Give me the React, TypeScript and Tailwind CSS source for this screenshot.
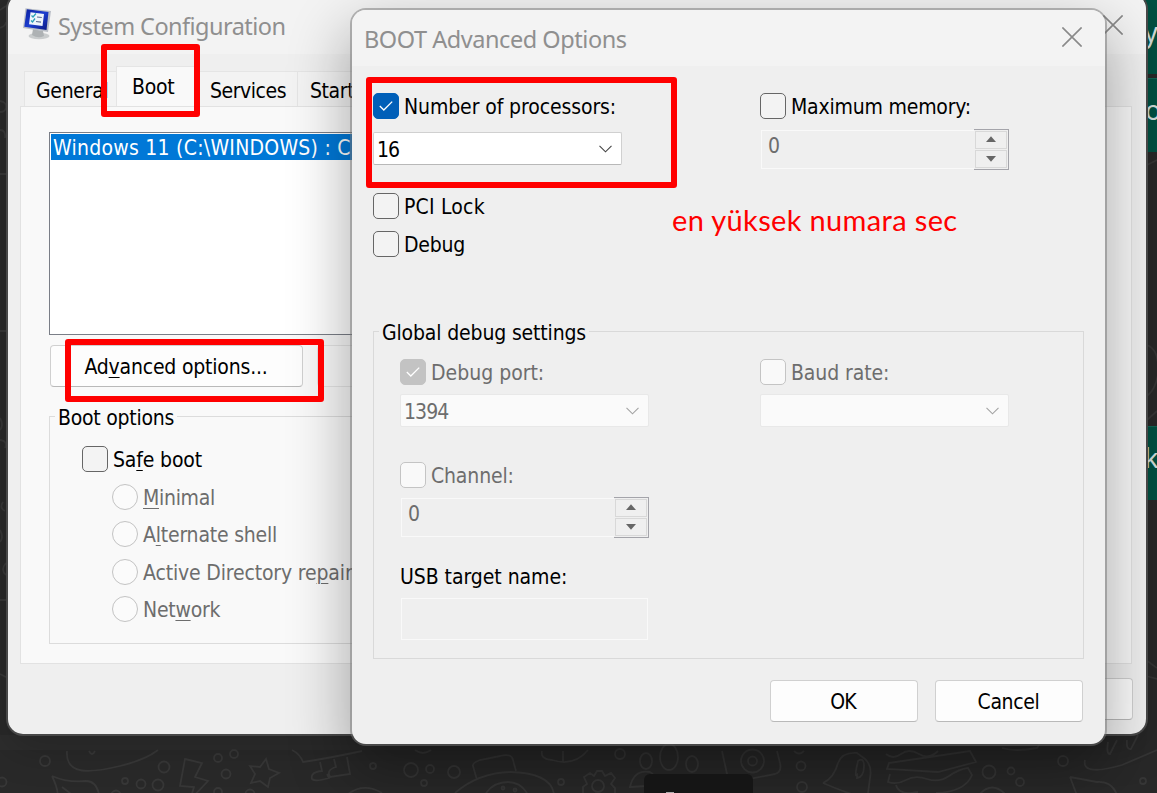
import type { ReactNode } from "react";

const ui = "font-['DejaVu_Sans_Condensed','DejaVu_Sans',sans-serif] [font-stretch:condensed] text-[21px] leading-[26px] whitespace-nowrap";

function Check({ on, disabled }: { on?: boolean; disabled?: boolean }) {
  const look = on
    ? disabled ? "bg-[#c3c3c3] border-[#c3c3c3]" : "bg-[#005fb8] border-[#005fb8]"
    : disabled ? "bg-[#f9f9f9] border-[#c4c4c4]" : "bg-[#f3f3f3] border-[#666]";
  return (
    <span className={`flex size-[26px] shrink-0 items-center justify-center rounded-[5px] border ${look}`}>
      {on && (
        <svg width="14" height="12" viewBox="0 0 14 12" fill="none" stroke="#fff" strokeWidth="1.3">
          <path d="M.8 6 4.8 10 13.2 1.6" />
        </svg>
      )}
    </span>
  );
}

function CheckRow({ children, on, disabled, className = "", track = "" }: {
  children: ReactNode; on?: boolean; disabled?: boolean; className?: string; track?: string;
}) {
  return (
    <label className={`flex h-[26px] shrink-0 items-center gap-[5px] ${disabled ? "text-[#6d6d6d]" : "text-black"} ${className}`}>
      <Check on={on} disabled={disabled} />
      <span className={`pt-[2px] ${track}`}>{children}</span>
    </label>
  );
}

function Radio({ children, track, className = "" }: { children: ReactNode; track: string; className?: string }) {
  return (
    <label className={`flex h-[26px] shrink-0 items-center gap-[5px] text-[#6d6d6d] ${className}`}>
      <span className="size-[26px] shrink-0 rounded-full border border-[#c3c3c3] bg-[#fbfbfb]" />
      <span className={`pt-[2px] ${track}`}>{children}</span>
    </label>
  );
}

function Select({ value, disabled, className }: { value: string; disabled?: boolean; className: string }) {
  return (
    <div className={`flex h-[33px] w-[249px] shrink-0 items-center justify-between rounded-[2px] border pr-[9px] pl-[3px] ${disabled ? "border-[#e8e8e8] bg-[#fafafa] text-[#6d6d6d]" : "border-[#d0d0d0] border-b-[#b8b8b8] bg-white text-black"} ${className}`}>
      <span className="pt-[2px] tracking-[-0.9px]">{value}</span>
      <svg width="13" height="8" viewBox="0 0 13 8" fill="none" stroke={disabled ? "#a3a3a3" : "#444"} strokeWidth="1.1">
        <path d="M.5.8 6.5 6.8 12.5.8" />
      </svg>
    </div>
  );
}

function Spinner({ className }: { className: string }) {
  return (
    <div className={`flex h-[41px] w-[249px] shrink-0 items-stretch ${className}`}>
      <div className="mt-px mb-px ml-px flex w-[213px] border border-r-0 border-[#f9f9f9] pt-[2px] pl-[6px] text-[#6d6d6d]">
        <span>0</span>
      </div>
      <div className="flex w-[35px] flex-col gap-px border border-l-0 border-[#a4a4aa] py-px pr-px pl-[1px]">
        <span className="flex flex-1 items-center justify-center border border-[#d8d8d8]">
          <svg width="10" height="6" className="mb-[2px]"><path d="M0 6 5 .3 10 6Z" fill="#666" /></svg>
        </span>
        <span className="flex flex-1 items-center justify-center border border-[#d8d8d8]">
          <svg width="10" height="6"><path d="M0 0 5 5.7 10 0Z" fill="#666" /></svg>
        </span>
      </div>
    </div>
  );
}

function Close({ className }: { className: string }) {
  return (
    <svg width="20" height="20" viewBox="0 0 20 20" stroke="#8a8a8a" strokeWidth="1.6" className={`shrink-0 ${className}`}>
      <path d="M.4.4 19.6 19.6M19.6.4.4 19.6" />
    </svg>
  );
}

function ComputerIcon() {
  return (
    <svg width="28" height="32" viewBox="0 0 28 32" className="-mt-[4px] shrink-0">
      <defs>
        <linearGradient id="scr" x1="0" y1="0" x2="1" y2="1">
          <stop offset="0" stopColor="#0a1ea0" />
          <stop offset=".5" stopColor="#1d3fd0" />
          <stop offset="1" stopColor="#0a1880" />
        </linearGradient>
      </defs>
      <ellipse cx="16" cy="28" rx="10.5" ry="3.2" fill="#c9cccd" />
      <path d="M10 21 20 23 21 28 Q15 31 9 27Z" fill="#aeb2b4" />
      <path d="M2.5 .3 28 3 25 24 0 20Z" fill="#b9bec6" />
      <path d="M3.800 1.300 25.500 4 23.500 22 1.300 18.800Z" fill="url(#scr)" />
      <path d="M7.500 4.300 21 6 19.500 18 6 16.200Z" fill="#eef4fb" />
      <path d="M8.500 7.500 10 9 13 5.500M8 12.500 9.500 14 12 10.500" fill="none" stroke="#2aa0b8" strokeWidth="1.300" />
      <path d="M14 9 18.800 9.500M13 13.500 18 14.100" stroke="#5b6f94" strokeWidth="1.200" />
    </svg>
  );
}

function Wallpaper() {
  return (
    <svg width="1157" height="793" viewBox="0 0 1157 793" fill="none" stroke="#373737" strokeWidth="1.8" className="absolute inset-0">
      <path d="M0 735H400V750H0Z" fill="#2d2d2d" stroke="none" />
      <circle cx="45" cy="761" r="5" /><circle cx="2" cy="782" r="4.500" />
      <circle cx="164" cy="767" r="5.500" /><circle cx="125" cy="781" r="3" />
      <circle cx="141" cy="784" r="4.500" /><circle cx="158" cy="785" r="5.500" />
      <circle cx="218" cy="758" r="4" /><circle cx="234" cy="754" r="4" />
      <circle cx="226" cy="774" r="4.500" /><circle cx="373" cy="766" r="3" />
      <circle cx="116" cy="795" r="4.500" /><circle cx="218" cy="792" r="4" /><circle cx="250" cy="794" r="4.500" />
      <path d="M67 751C65 776 91 773 120 766Q145 760 158 750M89 751Q92 757 95 751" />
      <path d="M52 776Q60 793 57 800M52 776Q68 783 86 781Q96 781 99 794M62 787 75 797" />
      <path d="M185 759 202 763 195 777 208 781 190 800 194 787 180 786Z" />
      <path d="M266 759 269 769 279 773 270 778 268 787 260 781 251 783 255 774 250 766 260 767Z" />
      <path d="M292 750Q300 754 303 762 330 758 362 751M320 762 322 771Q310 772 312 779 315 782 329 778L327 774M334 759 336 767Q326 770 330 777L350 774 347 757" />
      <path d="M347 795Q363 782 382 793" />
      <circle cx="411" cy="770" r="7" /><circle cx="430" cy="769" r="4" /><circle cx="424" cy="783" r="3" /><circle cx="454" cy="772" r="6" />
      <path d="M415 750Q423 756 431 750M477 780 473 766Q472 763 480 760L500 756Q512 753 513 760L516 771M455 793Q478 773 510 772 552 773 554 795M486 793Q494 782 508 782 520 782 527 793" />
      <circle cx="503" cy="788" r="1.500" /><circle cx="515" cy="790" r="1.500" />
      <path d="M542 751Q540 759 552 760 574 767 588 750M563 751V762" />
      <circle cx="561" cy="782" r="3" /><circle cx="620" cy="754" r="5" />
      <circle cx="598" cy="786" r="6" />
      <path d="M583 795V787L587 784 584 777 590 773 594 776 597 771H602L605 776 611 773 615 778 611 784 615 788V795" />
      <ellipse cx="646" cy="761" rx="6" ry="8" /><ellipse cx="669" cy="757" rx="9" ry="13" /><ellipse cx="692" cy="764" rx="6" ry="8" />
      <path d="M630 787Q634 769 650 772 660 778 647 786Z" />
      <path d="M722 751 729 783 775 774Q782 772 780 763L777 751" />
      <circle cx="752.500" cy="761" r="11.500" /><circle cx="752.500" cy="761" r="4.500" />
      <circle cx="801" cy="766" r="4.500" /><circle cx="802" cy="787" r="5" /><path d="M794 751Q799 756 804 751" />
      <path d="M823 783Q834 778 838 763 842 752 857 753L861 756Q873 763 870 778L868 793M823 783Q844 792 858 796M857 775Q854 778 858 761 864 757 864 766 864 777 857 778Z" />
      <path d="M886 754Q893 760 901 754T919 754T938 751M889 763 970 751 976 762 938 772 887 769ZM890 774 888 782Q897 785 906 780T927 779T949 776T968 768L972 775Q965 792 936 793M896 785Q899 796 918 792" />
      <circle cx="989" cy="772" r="6.500" /><circle cx="1011" cy="771" r="3.500" /><circle cx="1020" cy="782" r="4" /><circle cx="1063" cy="761" r="5" /><circle cx="1143" cy="781" r="3" />
      <path d="M979 795Q992 780 1006 795M1002 748Q1015 752 1037 748L1041 742M1085 760C1082 772 1098 772 1122 765L1157 750M1108 742Q1106 754 1110 754L1117 740M1127 740Q1126 750 1131 749L1138 735M1070 777 1078 798M1070 777 1097 782Q1112 781 1117 795" />
      <path d="M1147 345Q1160 350 1158 375 1155 390 1147 396M1147 420 1157 411M1147 165 1157 160M1146 660 1157 668M1146 676 1157 679" />
      <path d="M0 10 6 6M0 28Q6 26 6 22M0 101Q7 102 6 108 5 112 0 112M0 130Q6 130 5 138M0 174H8M0 331H8M0 418Q4 425 0 430M0 440Q8 441 5 448M3 502Q-1 508 5 511M0 530Q4 537 0 542M6 563Q0 570 6 575M0 600H8M0 674 8 678" />
    </svg>
  );
}

function Bubble({ className, letter }: { className: string; letter: string }) {
  return (
    <div className={`absolute left-[1140px] w-[24px] overflow-hidden border-t border-[#126656] bg-[#005344] font-['Noto_Sans',sans-serif] text-[27px] text-[#d9e4e1] ${className}`}>
      <span className="block whitespace-nowrap">{letter}</span>
    </div>
  );
}

function SystemConfiguration() {
  return (
    <section className="absolute -top-[6px] left-[8px] flex h-[740px] w-[1138px] flex-col overflow-hidden rounded-[15px] bg-[#efefef]">
      <header className="flex h-[60px] shrink-0 items-center justify-between bg-[#f3f3f3] pr-[23px] pl-[15px]">
        <div className="flex items-center gap-[7px] pt-[4px]">
          <ComputerIcon />
          <h1 className="font-['Noto_Sans',sans-serif] text-[23.5px] leading-[32px] tracking-[-0.55px] text-[#8f8f8f]">System Configuration</h1>
        </div>
        <Close className="mt-[2px]" />
      </header>

      <nav className="flex h-[52px] shrink-0 items-end pl-[16px]">
        <div className="flex h-[35px] w-[92px] items-center border border-r-0 border-b-0 border-[#e5e5e5] bg-[#f3f3f3] pt-[4px] pl-[11px]"><span className="tracking-[-0.3px]">General</span></div>
        <div className="flex h-[40px] w-[84px] items-center border border-b-0 border-[#e5e5e5] bg-[#f9f9f9] pl-[15px]"><span className="tracking-[-0.3px]">Boot</span></div>
        <div className="flex h-[35px] w-[98px] items-center border border-l-0 border-b-0 border-[#e5e5e5] bg-[#f3f3f3] pt-[4px] pl-[10px]"><span className="tracking-[-0.45px]">Services</span></div>
        <div className="flex h-[35px] w-[110px] items-center border border-l-0 border-b-0 border-[#e5e5e5] bg-[#f3f3f3] pt-[4px] pl-[12px]"><span className="tracking-[-0.4px]">Startup</span></div>
      </nav>

      <main className="mr-[14px] ml-[12px] flex h-[558px] shrink-0 flex-col border border-[#e2e2e2] bg-[#f9f9f9] pt-[25px] pl-[28px]">
        <div className="h-[203px] w-[1050px] shrink-0 border border-[#7a7e87] bg-white p-px">
          <div className="flex h-[26px] items-center bg-[#0078d7] pt-[2px] pl-[2px] text-white"><span className="tracking-[0.25px]">Windows 11 (C:\WINDOWS) : C</span></div>
        </div>
        <div className="mt-[10px] flex h-[42px] shrink-0 gap-[4px]">
          <button className="ml-[1px] flex w-[253px] items-center justify-center rounded-[4px] border border-[#d0d0d0] border-b-[#b9b9b9] bg-[#fdfdfd] pt-[2px] pr-[1px] text-black">
            <span className="tracking-[-0.2px]">Ad<u className="underline decoration-1 underline-offset-[3px]">v</u>anced options...</span>
          </button>
          <span className="ml-[10px] w-[252px] rounded-[4px] border border-[#e5e5e5] bg-[#fafafa]" />
        </div>
        <fieldset className="relative mt-[29px] flex h-[228px] w-[620px] shrink-0 flex-col border border-[#dcdcdc] pt-[29px] pl-[32px]">
          <span className="absolute -top-[12px] left-[5px] bg-[#f9f9f9] px-[3px] text-black"><span className="tracking-[-0.25px]">Boot options</span></span>
          <CheckRow track="tracking-[-0.15px]">Sa<u className="underline decoration-1 underline-offset-[3px]">f</u>e boot</CheckRow>
          <div className="flex flex-col pt-[12px] pl-[30px]">
            <Radio track="tracking-[-0.3px]"><u className="decoration-1 underline-offset-[3px]">M</u>inimal</Radio>
            <Radio className="mt-[11px]" track="tracking-[-0.2px]">A<u className="decoration-1 underline-offset-[3px]">l</u>ternate shell</Radio>
            <Radio className="mt-[12px]" track="tracking-[-0.15px]">Active Directory re<u className="decoration-1 underline-offset-[3px]">p</u>air</Radio>
            <Radio className="mt-[11px]" track="tracking-[-0.25px]">Net<u className="decoration-1 underline-offset-[3px]">w</u>ork</Radio>
          </div>
        </fieldset>
      </main>
      <footer className="mt-[14px] mr-[13px] flex justify-end">
        <span className="h-[42px] w-[148px] rounded-[4px] border border-[#d0d0d0] border-b-[#b9b9b9] bg-[#fdfdfd]" />
      </footer>
    </section>
  );
}

function AdvancedOptions() {
  return (
    <section className="absolute top-[10px] left-[352px] flex h-[734px] w-[753px] flex-col rounded-[14px] bg-[#efefef] shadow-[0_0_0_2px_rgba(117,117,117,0.5),0_24px_60px_4px_rgba(0,0,0,0.32)]">
      <header className="flex h-[56px] shrink-0 items-center justify-between rounded-t-[14px] bg-[#f3f3f3] pr-[23px] pl-[12px]">
        <h2 className="pt-[1px] font-['Noto_Sans',sans-serif] text-[23.5px] leading-[32px] tracking-[-0.45px] text-[#8f8f8f]">BOOT Advanced Options</h2>
        <Close className="mb-[2px]" />
      </header>

      <div className="flex h-[265px] shrink-0 pt-[27px] pl-[21px]">
        <div className="flex w-[387px] flex-col">
          <CheckRow on track="tracking-[-0.1px]">Number of processors:</CheckRow>
          <Select className="mt-[13px]" value="16" />
          <CheckRow className="mt-[28px]" track="tracking-[0.2px]">PCI Lock</CheckRow>
          <CheckRow className="mt-[12px]" track="tracking-[-0.2px]">Debug</CheckRow>
        </div>
        <div className="flex flex-col">
          <CheckRow track="tracking-[-0.2px]">Maximum memory:</CheckRow>
          <Spinner className="mt-[10px]" />
        </div>
      </div>

      <fieldset className="relative ml-[21px] flex h-[328px] w-[711px] shrink-0 border border-[#d9d9d9] pt-[27px] pl-[26px]">
        <span className="absolute -top-[12px] left-[5px] bg-[#efefef] px-[3px] text-black"><span className="tracking-[-0.15px]">Global debug settings</span></span>
        <div className="flex w-[360px] flex-col">
          <CheckRow on disabled track="tracking-[0px]">Debug port:</CheckRow>
          <Select className="mt-[9px]" value="1394" disabled />
          <CheckRow className="mt-[35px]" disabled track="tracking-[-0.15px]">Channel:</CheckRow>
          <Spinner className="mt-[9px]" />
          <span className="mt-[26px] tracking-[-0.05px] text-black">USB target name:</span>
          <div className="mt-[8px] ml-[1px] h-[42px] w-[247px] shrink-0 border border-[#f9f9f9]" />
        </div>
        <div className="flex flex-col">
          <CheckRow disabled track="tracking-[-0.1px]">Baud rate:</CheckRow>
          <Select className="mt-[9px]" value="" disabled />
        </div>
      </fieldset>

      <footer className="mt-[21px] mr-[22px] flex justify-end gap-[17px]">
        <button className="h-[42px] w-[148px] rounded-[4px] border border-[#d0d0d0] border-b-[#b9b9b9] bg-[#fdfdfd] pt-[2px] pr-[2px] tracking-[-0.8px] text-black">OK</button>
        <button className="h-[42px] w-[148px] rounded-[4px] border border-[#d0d0d0] border-b-[#b9b9b9] bg-[#fdfdfd] pt-[2px] pr-[1px] tracking-[-0.35px] text-black">Cancel</button>
      </footer>
    </section>
  );
}

export default function App() {
  return (
    <div className={`relative h-[793px] w-[1157px] overflow-hidden bg-[#292929] ${ui}`}>
      <Wallpaper />
      <Bubble className="top-[-1px] h-[75px] pt-[19px] pl-[4px]" letter="yo" />
      <Bubble className="top-[78px] h-[74px] pt-[18px] pl-[5px]" letter="o" />
      <Bubble className="top-[426px] h-[74px] pt-[18px] pl-[4px]" letter="k" />
      <div className="absolute -top-[6px] left-[8px] h-[740px] w-[1138px] rounded-[15px] shadow-[0_0_0_2px_#484848,0_14px_40px_rgba(0,0,0,0.2)]" />
      <SystemConfiguration />
      <AdvancedOptions />
      <div className="absolute top-[774px] left-[644px] h-[30px] w-[109px] rounded-[6px] bg-[#151515] pt-[18px] pl-[22px]">
        <div className="h-[2px] w-[8px] bg-[#aaa]" />
      </div>
      <div className="absolute top-[44px] left-[101px] h-[73px] w-[99px] rounded-[3px] border-[6px] border-[#ff0000]" />
      <div className="absolute top-[77px] left-[366px] h-[111px] w-[311px] rounded-[3px] border-[6px] border-[#ff0000]" />
      <div className="absolute top-[339px] left-[65px] h-[63px] w-[259px] rounded-[3px] border-[6px] border-[#ff0000]" />
      <p className="absolute top-[202px] left-[672px] font-['Lato',sans-serif] text-[29px] leading-[36px] tracking-[0.35px] text-[#ff0000]">en yüksek numara sec</p>
    </div>
  );
}
